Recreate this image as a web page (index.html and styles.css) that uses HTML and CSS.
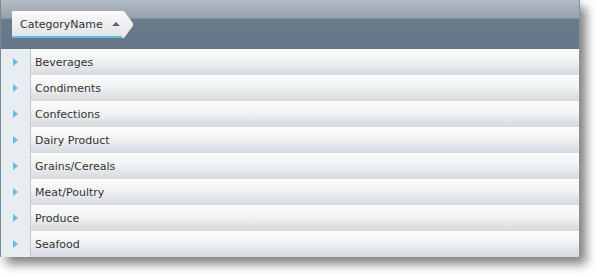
FILE: index.html
```html
<!DOCTYPE html>
<html lang="en">
<head>
    <meta charset="UTF-8">
    <title>Grouped Grid</title>
    <link rel="stylesheet" href="styles.css">
</head>
<body>
    <div class="page">
        <div class="grid">
            <div class="group-panel">
                <div class="group-chip">
                    <span class="chip-label">CategoryName</span>
                    <span class="sort-up"></span>
                </div>
            </div>
            <div class="rows">
                <div class="row"><div class="expander"><span class="arrow"></span></div><div class="cell">Beverages</div></div>
                <div class="row"><div class="expander"><span class="arrow"></span></div><div class="cell">Condiments</div></div>
                <div class="row"><div class="expander"><span class="arrow"></span></div><div class="cell">Confections</div></div>
                <div class="row"><div class="expander"><span class="arrow"></span></div><div class="cell">Dairy Product</div></div>
                <div class="row"><div class="expander"><span class="arrow"></span></div><div class="cell">Grains/Cereals</div></div>
                <div class="row"><div class="expander"><span class="arrow"></span></div><div class="cell">Meat/Poultry</div></div>
                <div class="row"><div class="expander"><span class="arrow"></span></div><div class="cell">Produce</div></div>
                <div class="row"><div class="expander"><span class="arrow"></span></div><div class="cell">Seafood</div></div>
            </div>
        </div>
    </div>
</body>
</html>
```

FILE: styles.css
```css
body {
    margin: 0;
    background-color: #fff;
    font-family: "DejaVu Sans", Verdana, sans-serif;
    font-size: 11px;
    color: #333;
}

.page {
    height: 277px;
    overflow: hidden;
}

.grid {
    width: 578px;
    border-left: 1px solid #7a8896;
    border-right: 1px solid #8c949b;
    box-shadow: 6px 7px 10px rgba(0, 0, 0, 0.5);
}

.group-panel {
    height: 49px;
    box-sizing: border-box;
    padding: 11px 0 0 11px;
    background: linear-gradient(#b4bcc4 0, #96a1ac 18px, #6a7c8c 19px, #647687 49px);
}

.group-chip {
    position: relative;
    display: flex;
    align-items: center;
    width: 110px;
    height: 27px;
    box-sizing: border-box;
    padding-left: 8px;
    background: linear-gradient(#fbfbfb, #e1e4e7);
    border-bottom: 2px solid #5ec0dc;
}

.group-chip::after {
    content: "";
    position: absolute;
    right: -11px;
    top: 0;
    width: 11px;
    height: 27px;
    background: linear-gradient(#f6f7f7, #e3e6e8);
    clip-path: polygon(0 0, 2px 0, 100% 45%, 100% 55%, 2px 100%, 0 100%);
}

.chip-label {
    margin-top: 1px;
}

.sort-up {
    flex-shrink: 0;
    margin-left: 9px;
    margin-top: 1px;
    width: 0;
    height: 0;
    border-left: 4px solid transparent;
    border-right: 4px solid transparent;
    border-bottom: 4px solid #5f646a;
}

.row {
    display: flex;
    height: 26px;
}

.expander {
    width: 29px;
    flex-shrink: 0;
    display: flex;
    align-items: center;
    justify-content: center;
    background-color: #e8edf1;
    border-right: 1px solid #c2c8ce;
}

.arrow {
    width: 0;
    height: 0;
    margin-left: -1px;
    border-top: 4px solid transparent;
    border-bottom: 4px solid transparent;
    border-left: 5px solid #5ec0e2;
}

.cell {
    flex: 1;
    display: flex;
    align-items: center;
    padding-left: 4px;
    background: linear-gradient(#fafafa, #f3f4f5 40%, #d4d9de);
    border-top: 1px solid #fff;
}
```
